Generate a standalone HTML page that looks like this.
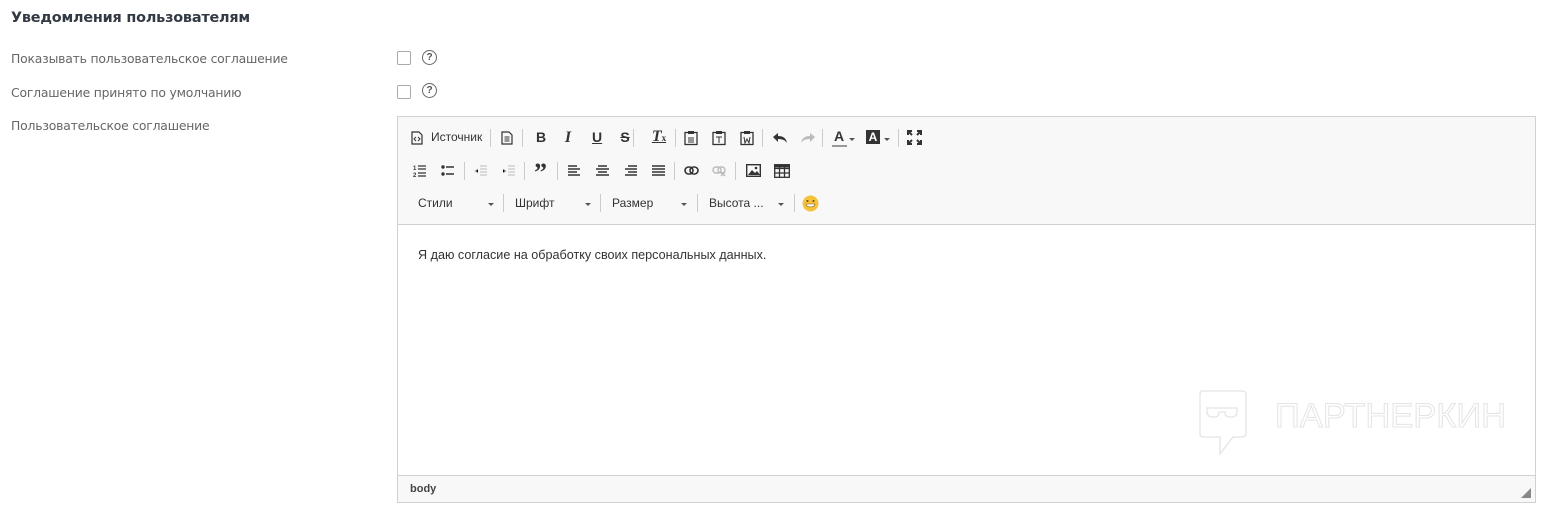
<!DOCTYPE html>
<html><head><meta charset="utf-8"><style>
body{margin:0;width:1557px;height:507px;background:#fff;font-family:"Liberation Sans","DejaVu Sans",sans-serif;position:relative;overflow:hidden}
.a{position:absolute}
.h{left:11px;top:10px;font-size:14.4px;color:#333a44;font-family:"DejaVu Sans",sans-serif;font-weight:bold;letter-spacing:-0.2px}
.lbl{left:11px;font-size:12.4px;color:#666;font-family:"DejaVu Sans",sans-serif;letter-spacing:-0.2px}
.cb{width:12px;height:12px;border:1px solid #aaa;border-radius:2px;background:#fff}
.q{width:13px;height:13px;border:1.3px solid #666;border-radius:50%;font-size:10px;color:#555;text-align:center;line-height:13px;font-weight:bold}
.ed{left:397px;top:116px;width:1137px;height:385px;border:1px solid #d1d1d1}
.tb{left:0;top:0;width:1137px;height:107px;background:#f8f8f8;border-bottom:1px solid #d1d1d1}
.bb{left:0;bottom:0;width:1137px;height:26px;background:#f8f8f8;border-top:1px solid #d1d1d1}
.sep{width:1px;height:18px;background:#ccc}
.t{font-size:12px;color:#333}
.ic{font-size:14px;color:#333;font-weight:bold;text-align:center;width:18px}
.car{width:0;height:0;border-left:3px solid transparent;border-right:3px solid transparent;border-top:3px solid #555}
</style></head><body>
<div class="a h">Уведомления пользователям</div>
<div class="a lbl" style="top:51px">Показывать пользовательское соглашение</div>
<div class="a lbl" style="top:85px">Соглашение принято по умолчанию</div>
<div class="a lbl" style="top:118px">Пользовательское соглашение</div>
<div class="a cb" style="left:397px;top:51px"></div><div class="a q" style="left:422px;top:50px">?</div>
<div class="a cb" style="left:397px;top:85px"></div><div class="a q" style="left:422px;top:83px">?</div>

<div class="a ed">
<div class="a tb">
<svg class="a" style="left:13px;top:14px" width="12" height="14"><path d="M1 1h7l3 3v9H1z" fill="none" stroke="#333" stroke-width="1.2"/><path d="M5 6l-2 2 2 2M7 6l2 2-2 2" fill="none" stroke="#333"/></svg>
<div class="a t" style="left:33px;top:13px">Источник</div>
<div class="a sep" style="left:92px;top:12px"></div>
<svg class="a" style="left:103px;top:14px" width="12" height="14"><path d="M1 1h7l3 3v9H1z" fill="none" stroke="#333" stroke-width="1.2"/><path d="M3.5 6h5M3.5 8h5M3.5 10h5" stroke="#333"/></svg>
<div class="a sep" style="left:124px;top:12px"></div>
<div class="a ic" style="left:134px;top:12px">B</div>
<div class="a ic" style="left:161px;top:12px;font-style:italic;font-family:'Liberation Serif',serif;font-size:16px">I</div>
<div class="a ic" style="left:190px;top:12px;text-decoration:underline">U</div>
<div class="a ic" style="left:218px;top:12px;text-decoration:line-through">S</div>
<div class="a sep" style="left:235px;top:12px"></div>
<div class="a ic" style="left:252px;top:11px;font-style:italic;font-family:'Liberation Serif',serif;font-size:16px;text-decoration:underline">T<span style="font-size:9px;font-style:normal">x</span></div>
<div class="a sep" style="left:277px;top:12px"></div>
<svg class="a" style="left:286px;top:13px" width="14" height="16"><rect x="1" y="2.5" width="12" height="12" fill="none" stroke="#333" stroke-width="1.3"/><rect x="4" y="1" width="6" height="3" fill="#333"/><path d="M4 8h6M4 10h6M4 12h6" stroke="#333"/></svg>
<svg class="a" style="left:314px;top:13px" width="14" height="16"><rect x="1" y="2.5" width="12" height="12" fill="none" stroke="#333" stroke-width="1.3"/><rect x="4" y="1" width="6" height="3" fill="#333"/><path d="M4 7h6M7 7v6" stroke="#333"/></svg>
<svg class="a" style="left:342px;top:13px" width="14" height="16"><rect x="1" y="2.5" width="12" height="12" fill="none" stroke="#333" stroke-width="1.3"/><rect x="4" y="1" width="6" height="3" fill="#333"/><path d="M4 7l1 6 2-4 2 4 1-6" fill="none" stroke="#333"/></svg>
<div class="a sep" style="left:364px;top:12px"></div>
<svg class="a" style="left:374px;top:15px" width="16" height="12"><path d="M1 5l5-4v3c5 0 8 2 9 7-2-3-5-4-9-4v3z" fill="#333"/></svg>
<svg class="a" style="left:402px;top:15px" width="16" height="12"><path d="M15 5l-5-4v3c-5 0-8 2-9 7 2-3 5-4 9-4v3z" fill="#bbb"/></svg>
<div class="a sep" style="left:424px;top:12px"></div>
<div class="a ic" style="left:432px;top:11px">A</div><div class="a" style="left:434px;top:28px;width:15px;height:2px;background:#999"></div>
<div class="a car" style="left:451px;top:21px"></div>
<div class="a" style="left:468px;top:13px;width:14px;height:14px;background:#333;color:#fff;font-size:12px;font-weight:bold;text-align:center;line-height:14px">A</div>
<div class="a car" style="left:486px;top:21px"></div>
<div class="a sep" style="left:500px;top:12px"></div>
<svg class="a" style="left:509px;top:13px" width="15" height="15" stroke="#333" stroke-width="2" fill="none"><path d="M1 5V1h4M1 1l4 4M10 1h4v4M14 1l-4 4M1 10v4h4M1 14l4-4M14 10v4h-4M14 14l-4-4"/></svg>
<svg class="a" style="left:15px;top:47px" width="14" height="14"><text x="0" y="6" font-size="6" font-family="Liberation Sans" font-weight="bold" fill="#333">1</text><text x="0" y="13" font-size="6" font-family="Liberation Sans" font-weight="bold" fill="#333">2</text><path d="M5 2h8M5 5h8M5 9h8M5 12h8" stroke="#333" stroke-width="1.3"/></svg>
<svg class="a" style="left:43px;top:47px" width="14" height="14"><circle cx="2" cy="3" r="1.7" fill="#333"/><circle cx="2" cy="10" r="1.7" fill="#333"/><path d="M5 3h8M5 10h8" stroke="#333" stroke-width="1.6"/></svg>
<div class="a sep" style="left:66px;top:45px"></div>
<svg class="a" style="left:76px;top:47px" width="14" height="14" stroke="#bbb"><path d="M6 2h7M6 5h7M6 8h7M6 11h7M4 5L1 7l3 2"/></svg>
<svg class="a" style="left:104px;top:47px" width="14" height="14" stroke="#bbb"><path d="M6 2h7M6 5h7M6 8h7M6 11h7M1 5l3 2-3 2"/></svg>
<div class="a sep" style="left:126px;top:45px"></div>
<div class="a" style="left:136px;top:44px;font-size:26px;font-weight:bold;color:#333;font-family:'Liberation Serif',serif;line-height:24px">”</div>
<div class="a sep" style="left:159px;top:45px"></div>
<svg class="a" style="left:170px;top:47px" width="13" height="13" stroke="#333" stroke-width="1.6"><path d="M0 2h9M0 5h12M0 8h9M0 11h12"/></svg>
<svg class="a" style="left:198px;top:47px" width="13" height="13" stroke="#333" stroke-width="1.6"><path d="M2 2h9M0 5h13M2 8h9M0 11h13"/></svg>
<svg class="a" style="left:226px;top:47px" width="13" height="13" stroke="#333" stroke-width="1.6"><path d="M4 2h9M1 5h12M4 8h9M1 11h12"/></svg>
<svg class="a" style="left:254px;top:47px" width="13" height="13" stroke="#333" stroke-width="1.6"><path d="M0 2h13M0 5h13M0 8h13M0 11h13"/></svg>
<div class="a sep" style="left:276px;top:45px"></div>
<svg class="a" style="left:286px;top:49px" width="15" height="9" fill="none" stroke="#333" stroke-width="1.6"><rect x="1" y="1" width="8" height="7" rx="3.5"/><rect x="6" y="1" width="8" height="7" rx="3.5"/></svg>
<svg class="a" style="left:314px;top:49px" width="15" height="11" fill="none" stroke="#bbb" stroke-width="1.4"><rect x="1" y="1" width="8" height="6" rx="3"/><rect x="6" y="1" width="7" height="6" rx="3"/><path d="M9 6l4 4M13 6l-4 4"/></svg>
<div class="a sep" style="left:337px;top:45px"></div>
<svg class="a" style="left:348px;top:47px" width="15" height="13"><rect x="0.7" y="0.7" width="13.6" height="11.6" fill="none" stroke="#333" stroke-width="1.4"/><path d="M2 11l4-5 3 3 2-2 3 4z" fill="#333"/><circle cx="10" cy="4" r="1.3" fill="#333"/></svg>
<svg class="a" style="left:376px;top:47px" width="16" height="14" fill="none" stroke="#333" stroke-width="1.3"><rect x="0.7" y="0.7" width="14.6" height="12.6"/><path d="M0 4.5h16M0 9h16M5.5 0v14M10.5 0v14"/><path d="M0 2h16" stroke-width="3"/></svg>
<div class="a t" style="left:20px;top:79px">Стили</div><div class="a car" style="left:90px;top:86px"></div>
<div class="a sep" style="left:105px;top:77px"></div>
<div class="a t" style="left:117px;top:79px">Шрифт</div><div class="a car" style="left:187px;top:86px"></div>
<div class="a sep" style="left:202px;top:77px"></div>
<div class="a t" style="left:214px;top:79px">Размер</div><div class="a car" style="left:283px;top:86px"></div>
<div class="a sep" style="left:299px;top:77px"></div>
<div class="a t" style="left:311px;top:79px">Высота ...</div><div class="a car" style="left:380px;top:86px"></div>
<div class="a sep" style="left:396px;top:77px"></div>
<svg class="a" style="left:404px;top:78px" width="17" height="17"><circle cx="8.5" cy="8.5" r="8" fill="#f5c33b"/><path d="M4 9h9c0 4-9 4-9 0z" fill="#fff" stroke="#8a5a10" stroke-width=".6"/><circle cx="5.5" cy="6" r="1" fill="#6b4210"/><circle cx="11.5" cy="6" r="1" fill="#6b4210"/></svg>
</div>
<div class="a" style="left:20px;top:131px;font-size:12.6px;color:#333">Я даю согласие на обработку своих персональных данных.</div>
<svg class="a" style="left:800px;top:272px" width="330" height="70" fill="none" stroke="#e4e4e4" stroke-width="1.3"><path d="M3 2h42a3 3 0 0 1 3 3v40a3 3 0 0 1-3 3H35l-13 17V48H5a3 3 0 0 1-3-3V5a3 3 0 0 1 3-3z"/><path d="M9 19h30v4a5 5 0 0 1-5 5h-3a4 4 0 0 1-4-4v-1h-6v1a4 4 0 0 1-4 4h-3a5 5 0 0 1-5-5z"/><text x="77" y="38" font-size="34.5" font-family="Liberation Sans,sans-serif" fill="none" stroke="#e4e4e4" stroke-width="1">ПАРТНЕРКИН</text></svg>
<div class="a bb"><div class="a" style="left:12px;top:7px;font-size:11px;font-weight:bold;color:#444">body</div>
<svg class="a" style="right:4px;bottom:4px" width="10" height="10"><path d="M10 0v10H0z" fill="#888"/></svg></div>
</div>
</body></html>
